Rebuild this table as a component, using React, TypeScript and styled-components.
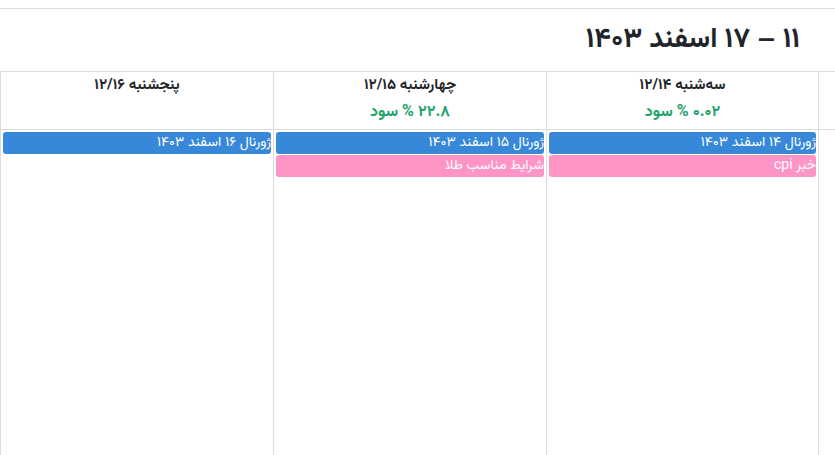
import React from "react"
import styled, { createGlobalStyle } from "styled-components"

const colors = {
	line: "#dddddd",
	text: "#212529",
	green: "#22a36b",
	blue: "#3788d8",
	pink: "#ff94c6",
	white: "#ffffff",
}

const GlobalStyle = createGlobalStyle`
	html, body {
		margin: 0;
		padding: 0;
		background: ${colors.white};
		overflow: hidden;
	}
	body {
		font-family: "Vazirmatn", "Vazir", "Noto Sans Arabic", "DejaVu Sans", sans-serif;
		color: ${colors.text};
	}
`

const Page = styled.div`
	direction: rtl;
	margin-top: 8px;
	border-top: 1px solid ${colors.line};
	height: 446px;
	display: flex;
	flex-direction: column;
`

const Toolbar = styled.div`
	height: 62px;
	display: flex;
	align-items: center;
	padding-right: 35px;
`

const Title = styled.h2`
	margin: 0;
	font-size: 28px;
	font-weight: bold;
	line-height: 36px;
	color: ${colors.text};
`

const Grid = styled.div`
	flex: 1;
	display: grid;
	grid-template-columns: 17px 272px 273px 273px;
	grid-template-rows: 58px 1fr;
	border-top: 1px solid ${colors.line};
`

const HeaderCell = styled.div`
	border-bottom: 1px solid ${colors.line};
	border-left: 1px solid ${colors.line};
	display: flex;
	flex-direction: column;
	align-items: center;
	padding-top: 4px;
	gap: 7px;
`

const DayLabel = styled.div`
	font-size: 15px;
	font-weight: bold;
	line-height: 20px;
`

const Profit = styled.div`
	font-size: 16px;
	font-weight: bold;
	line-height: 20px;
	color: ${colors.green};
`

const DayCell = styled.div`
	border-left: 1px solid ${colors.line};
	padding: 2px 2px 0 2px;
	display: flex;
	flex-direction: column;
	gap: 1px;
	min-width: 0;
`

const Gutter = styled.div`
	border-left: 1px solid ${colors.line};
`

const Event = styled.div<{ $kind: "journal" | "news" }>`
	height: 22px;
	line-height: 22px;
	border-radius: 3px;
	background: ${(p) => (p.$kind === "journal" ? colors.blue : colors.pink)};
	color: ${colors.white};
	font-size: 14px;
	font-weight: normal;
	white-space: nowrap;
	overflow: hidden;
	padding: 0 0 0 4px;
`

interface IDay {
	readonly label: string
	readonly profit?: string
	readonly events: { title: string; kind: "journal" | "news" }[]
}

const days: IDay[] = [
	{
		label: "سه‌شنبه ۱۲/۱۴",
		profit: "۰.۰۲ % سود",
		events: [
			{ title: "ژورنال ۱۴ اسفند ۱۴۰۳", kind: "journal" },
			{ title: "خبر cpi", kind: "news" },
		],
	},
	{
		label: "چهارشنبه ۱۲/۱۵",
		profit: "۲۲.۸ % سود",
		events: [
			{ title: "ژورنال ۱۵ اسفند ۱۴۰۳", kind: "journal" },
			{ title: "شرایط مناسب طلا", kind: "news" },
		],
	},
	{
		label: "پنجشنبه ۱۲/۱۶",
		events: [{ title: "ژورنال ۱۶ اسفند ۱۴۰۳", kind: "journal" }],
	},
]

const App = () => (
	<>
		<GlobalStyle />
		<Page>
			<Toolbar>
				<Title>۱۱ – ۱۷ اسفند ۱۴۰۳</Title>
			</Toolbar>

			<Grid>
				<HeaderCell />
				{days.map((d) => (
					<HeaderCell key={d.label}>
						<DayLabel>{d.label}</DayLabel>
						{d.profit && <Profit>{d.profit}</Profit>}
					</HeaderCell>
				))}

				<Gutter />
				{days.map((d) => (
					<DayCell key={d.label}>
						{d.events.map((e) => (
							<Event key={e.title} $kind={e.kind}>
								{e.title}
							</Event>
						))}
					</DayCell>
				))}
			</Grid>
		</Page>
	</>
)

export default App
